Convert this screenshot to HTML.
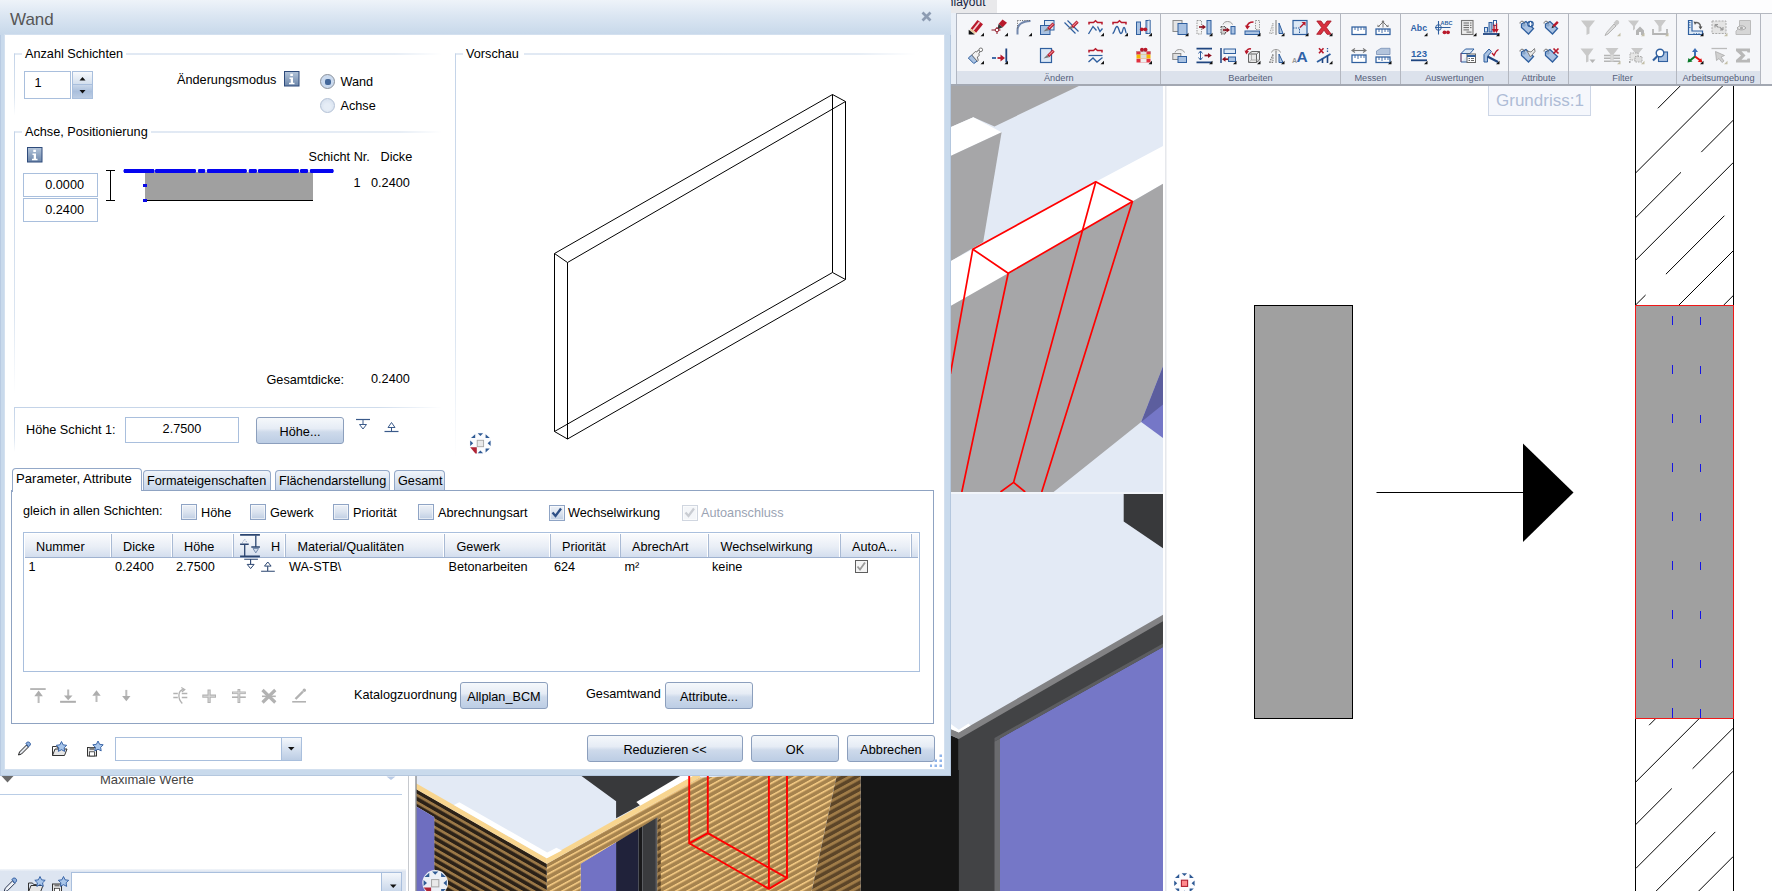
<!DOCTYPE html>
<html><head><meta charset="utf-8"><title>Wand</title>
<style>
*{box-sizing:border-box;margin:0;padding:0}
html,body{width:1772px;height:891px;overflow:hidden;background:#fff}
body{font-family:"Liberation Sans",sans-serif;font-size:13px;color:#000;position:relative}
.a{position:absolute}
.t{position:absolute;white-space:nowrap;line-height:16px;height:16px}
#stage{position:absolute;left:0;top:0;width:1772px;height:891px;overflow:hidden;background:#fff}
/* dialog */
#dlg{position:absolute;left:0;top:0;width:950.5px;height:775.5px;background:#c9daec;box-shadow:inset -1px -1px 0 #b4c7de, inset 1px 0 0 #b9cbe2}
#dlgtitle{position:absolute;left:0;top:0;width:950.5px;height:35px;background:linear-gradient(#eef3f9 0%,#dbe6f2 45%,#c7d8ea 100%)}
#dlgbody{position:absolute;left:5px;top:35px;width:939.3px;height:734.2px;background:#fff;box-shadow:0 0 0 1px #d3e0ef}
.inp{position:absolute;background:#fff;border:1px solid #a9bfdd}
.btn{position:absolute;border:1px solid #8c9fbd;border-radius:3px;background:linear-gradient(#f5f8fb 0%,#e6ecf5 42%,#cedaeb 56%,#bccde4 100%);text-align:center;white-space:nowrap}
.cb{position:absolute;width:16px;height:16px;border:1px solid #8fa4c5;background:linear-gradient(#edf1f7 0%,#dbe3ef 50%,#bfcee3 100%);box-shadow:inset 0 0 0 1px rgba(255,255,255,.55)}
.tab{position:absolute;border:1px solid #93a8c8;border-bottom:none;border-radius:4px 4px 0 0;background:linear-gradient(#f0f4fa 0%,#dde6f2 45%,#c4d3e8 100%);white-space:nowrap}
.th{position:absolute;top:0;height:23px;border-right:1px solid #a9bad4;box-shadow:inset -2px 0 0 -1px #fff;line-height:26px;white-space:nowrap}
.info{width:15.5px;height:15.5px;border:1px solid #5f7aa3;background:linear-gradient(#9ab0cf,#7690b6);}
.info:after{content:"";position:absolute;left:5.5px;top:6px;width:3px;height:6.5px;background:#fff;box-shadow:0 -3.5px 0 -0px #fff, -1.5px 0 0 -0.8px #fff}
.radio{width:15px;height:15px;border-radius:50%;border:1px solid #b3c1d5;background:radial-gradient(circle at 50% 60%,#e6edf6 30%,#d3deed 90%)}
.radio.on{border-color:#8b929c;background:#cbdaee}
.radio i{position:absolute;left:3.5px;top:3.5px;width:6px;height:6px;border-radius:2px;background:#44689a}
</style></head><body><div id="stage">
<svg class="a" style="left:0;top:0" width="1772" height="891" viewBox="0 0 1772 891" shape-rendering="auto">
<defs>
<clipPath id="cUp"><rect x="951" y="86" width="212" height="406"/></clipPath>
<clipPath id="cLo"><rect x="416" y="494" width="747" height="397"/></clipPath>
<clipPath id="cCol"><rect x="1635.5" y="86" width="98" height="805"/></clipPath>
<pattern id="woodL" width="40" height="6.2" patternUnits="userSpaceOnUse" patternTransform="skewY(-28.6)">
 <rect width="40" height="6.2" fill="#a6834e"/><rect y="0" width="40" height="1.7" fill="#f3c983"/><rect y="1.7" width="40" height=".8" fill="#c49c60"/>
</pattern>
<pattern id="woodLs" width="40" height="7.2" patternUnits="userSpaceOnUse" patternTransform="skewY(-28.6)">
 <rect width="40" height="7.2" fill="#5c4528"/><rect y="0" width="40" height="3.2" fill="#a07c48"/>
</pattern>
<pattern id="woodD" width="40" height="7.3" patternUnits="userSpaceOnUse" patternTransform="skewY(29.8)">
 <rect width="40" height="7.3" fill="#2b2117"/><rect y="0" width="40" height="3.1" fill="#9b7847"/>
</pattern>
</defs>
<!-- plan view -->
<rect x="1163" y="86" width="609" height="805" fill="#fff"/>
<rect x="1165" y="86" width="1.5" height="805" fill="#e6e8ec"/>
<g clip-path="url(#cCol)" stroke="#000" stroke-width="1" fill="none">
 <path d="M1657.9 108.3L1681 85.2M1635.2 173.4L1724.4 84.2M1701.3 152.1L1733.3 120.1M1635.2 218.1L1681 172.3M1635.2 260.6L1733.3 162.5M1665.9 274.2L1724.4 215.7M1678.6 305.4L1733.3 250.7M1635.2 305.4L1645.6 295M1723.4 305.4L1733.3 295.5"/>
 <path d="M1649.1 725.2L1656.2 718.1M1635.9 781.9L1699.7 718.1M1692.6 768.7L1733.2 728.1M1635.9 824.4L1671.8 788.5M1635.9 868.4L1733.2 771.1M1656.2 891L1715.3 831.9M1698.7 891L1733.2 856.5"/>
</g>
<path d="M1635.5 86V891M1733.5 86V891" stroke="#000" stroke-width="1"/>
<rect x="1635.5" y="305.5" width="98" height="413" fill="#a0a0a0" stroke="#f01818" stroke-width="1"/>
<g stroke="#1414e6" stroke-width="1">
 <path d="M1672.5 316v9M1672.5 365v9M1672.5 414v9M1672.5 463v9M1672.5 512v9M1672.5 561v9M1672.5 610v9M1672.5 659v9M1672.5 708v10"/>
 <path d="M1700.5 317v8M1700.5 366v8M1700.5 415v8M1700.5 464v8M1700.5 513v8M1700.5 562v8M1700.5 611v8M1700.5 660v8M1700.5 709v9"/>
</g>
<rect x="1254.5" y="305.5" width="98" height="413" fill="#a0a0a0" stroke="#000" stroke-width="1"/>
<path d="M1376.5 492.5H1524" stroke="#000" stroke-width="1"/>
<polygon points="1523,443.5 1573.5,492.5 1523,542" fill="#000"/>

<!-- upper 3D -->
<g clip-path="url(#cUp)">
 <rect x="951" y="86" width="212" height="406" fill="#e3eaf5"/>
 <polygon points="950.9,85.2 1080.5,85.2 994.5,126.4 973.3,117.2 950.9,127.1" fill="#a6a6a8"/>
 <polygon points="950.9,127.1 973.3,117.2 1001.6,132.3 950.9,155.9" fill="#fff"/>
 <polygon points="950.9,155.9 1001.6,132.3 983.2,242.1 950.9,261" fill="#a6a6a8"/>
 <polygon points="1163,146 1163,183.7 1132.4,201.4 1008.2,273.3 998,280 950.9,305.9 950.9,261 972.8,249.2 1095.8,181.8" fill="#fff"/>
 <polygon points="1163,183.7 1132.4,201.4 1008.2,273.3 950.9,305.9 950.9,492 1053.6,492 1141.2,421.9 1163,366.4" fill="#a6a6a8"/>
 <polygon points="1141.2,421.9 1163,366.4 1163,438" fill="#7577c7"/>
 <polygon points="1141.2,421.9 1163,366.4 1163,404.5" fill="#5c5e9e"/>
 <g stroke="#f00" stroke-width="1.7" fill="none" stroke-linejoin="round">
  <polygon points="1095.8,181.8 1132.4,201.4 1008.2,273.3 972.8,249.2"/>
  <path d="M972.8 249.2L950.4 373.8M1008.2 273.3L961.8 492M1095.8 181.8L1013.6 482.4L1000.5 492M1013.6 482.4L1025.2 492M1132.4 201.4L1041.7 492"/>
 </g>
</g>
<!-- separator between 3D views -->
<rect x="951" y="492" width="212" height="2.5" fill="#f2f5fa"/>
<!-- lower 3D -->
<g clip-path="url(#cLo)">
 <rect x="416" y="494" width="747" height="397" fill="#e3eaf5"/>
 <!-- right part visible beside dialog -->
 <polygon points="1123.7,494 1163,494 1163,548.3 1123.7,521.5" fill="#38393b"/>
 <polygon points="1163,616 958.8,734 958.8,891 1163,891" fill="#424345"/>
 <polygon points="1163,614.7 958.8,732.3 950.5,728.8 950.5,735 958.8,738.9 1163,621.3" fill="#828284"/>
 <polygon points="1163,647 1000,738.4 1000,891 1163,891" fill="#7577c7"/>
 <polygon points="1000,738.4 994.5,741.5 994.5,891 1000,891" fill="#6a6b6e"/>
 <polygon points="1163,647 1000,738.4 994.5,741.5 994.5,738 1163,643.4" fill="#5c5d60"/>
 <polygon points="950,735 958.8,738.9 958.8,891 950,891" fill="#151515"/>
 <polygon points="950.5,723.7 958.8,729.8 968.5,723.6 970.5,725.4 958.8,732.6 950.5,728.9" fill="#fff"/>
 <!-- under dialog: black right -->
 <rect x="860.6" y="770" width="98.2" height="121" fill="#151515"/>
 <!-- dark gray recess + white sliver -->
 <polygon points="573.3,770 690,770 690,778 639.8,805.3 616.1,818.2 616.1,801.2" fill="#38393b"/>
 <polygon points="636.4,801.9 686,772.5 700,772.5 640.5,806" fill="#fff"/>
 <!-- window opening under beam -->
 <polygon points="580.7,863.7 616.1,842 616.1,891 580.7,891" fill="#7272c4"/>
 <polygon points="616.1,836 638.5,826 638.5,891 616.1,891" fill="#20223a"/>
 <polygon points="638.5,826 642.5,824 642.5,891 638.5,891" fill="#19191b"/>
 <polygon points="642.5,824 657.5,815 657.5,891 642.5,891" fill="#3a3b3e"/>
 <polygon points="655.5,816 657.5,815 657.5,891 655.5,891" fill="#5a5b5e"/>
 <!-- right wall light wood: beam + pillar + right portion -->
 <polygon points="546.8,863.7 700,777.5 837.5,772 811.7,891 657.5,891 657.5,817.3 580.7,863.7 580.7,891 546.8,891" fill="url(#woodL)"/>
 <polygon points="657.5,820 660.8,818 660.8,891 657.5,891" fill="url(#woodLs)"/>
 <polygon points="837.5,772 860.6,772 860.6,891 811.7,891" fill="url(#woodLs)"/>
 <!-- cap right wall -->
 <polygon points="546.8,858.3 700,772.1 700,777.5 546.8,863.7" fill="#f8d58f"/>
 <!-- left wall dark wood -->
 <polygon points="416,789 546.8,863.7 546.8,891 434.2,891 434.2,817 416,806.2" fill="url(#woodD)"/>
 <polygon points="416,806.2 434.2,817 434.2,891 416,891" fill="#6e6ec0"/>
 <polygon points="416,783.3 546.8,858.3 546.8,863.7 416,789" fill="#f8d58f"/>
 <!-- white parapet band -->
 <polygon points="453.9,805 459.3,802.2 547.3,852.6 556.4,847.8 561.9,850.4 546.8,858.3" fill="#fff"/>
 <!-- red wire -->
 <g stroke="#f00" stroke-width="1.9" fill="none">
  <path d="M689.2 770V843.3L768.9 888.8L787 878V770M707.8 770V833.2L787 878M689.2 843.3L707.8 833.2M768.9 770V888.8"/>
 </g>
</g>
<!-- frame between left palette and 3D view -->
<rect x="408" y="776" width="8" height="115" fill="#fff"/>
<rect x="408" y="776" width="1" height="115" fill="#c6c9ce"/>
<rect x="415.3" y="776" width="1.4" height="115" fill="#8e9094"/>
</svg>
<div class="a" id="tb" style="left:951px;top:0;width:821px;height:86px;background:#fdfdfe"><div class="a" style="left:0;top:0;width:46px;height:12.5px;background:#e9e9eb;overflow:hidden"><div class="t" style="left:-4.2px;top:-5.8px;font-size:12px;color:#16233f">nlayout</div></div><div class="a" style="left:0;top:13px;width:821px;height:73px;background:#f5f6f9;border-top:1px solid #b4b8c0"></div><div class="a" style="left:0;top:13px;width:6px;height:71px;background:#e9eff7;border-right:1px solid #b0b6c2"></div><div class="a" style="left:6px;top:71px;width:803.5px;height:13.5px;background:#dce2ec"></div><div class="a" style="left:0;top:84px;width:821px;height:2px;background:#a3a8b2"></div><div class="a" style="left:209.0px;top:14px;width:1px;height:70px;background:#b3b7c0"></div><div class="t" style="left:6px;width:203.5px;top:70.5px;text-align:center;font-size:9.2px;line-height:14px;height:14px;color:#55607a">Ändern</div><div class="a" style="left:389.0px;top:14px;width:1px;height:70px;background:#b3b7c0"></div><div class="t" style="left:209.5px;width:180.0px;top:70.5px;text-align:center;font-size:9.2px;line-height:14px;height:14px;color:#55607a">Bearbeiten</div><div class="a" style="left:449.0px;top:14px;width:1px;height:70px;background:#b3b7c0"></div><div class="t" style="left:389.5px;width:60.0px;top:70.5px;text-align:center;font-size:9.2px;line-height:14px;height:14px;color:#55607a">Messen</div><div class="a" style="left:557.0px;top:14px;width:1px;height:70px;background:#b3b7c0"></div><div class="t" style="left:449.5px;width:108.0px;top:70.5px;text-align:center;font-size:9.2px;line-height:14px;height:14px;color:#55607a">Auswertungen</div><div class="a" style="left:617.0px;top:14px;width:1px;height:70px;background:#b3b7c0"></div><div class="t" style="left:557.5px;width:60.0px;top:70.5px;text-align:center;font-size:9.2px;line-height:14px;height:14px;color:#55607a">Attribute</div><div class="a" style="left:725.0px;top:14px;width:1px;height:70px;background:#b3b7c0"></div><div class="t" style="left:617.5px;width:108.0px;top:70.5px;text-align:center;font-size:9.2px;line-height:14px;height:14px;color:#55607a">Filter</div><div class="a" style="left:809.0px;top:14px;width:1px;height:70px;background:#b3b7c0"></div><div class="t" style="left:725.5px;width:84.0px;top:70.5px;text-align:center;font-size:9.2px;line-height:14px;height:14px;color:#55607a">Arbeitsumgebung</div><svg class="a" style="left:0;top:0" width="821" height="86" viewBox="951 0 821 86"><g transform="translate(967.5,19.5)"><path d="M10 .5l5.5 4.2-6.8 8.5L3.2 9z" fill="#b8192b"/><path d="M11.3 2.3l1.3 1-6.5 8.2-1.3-1z" fill="#f6d0d4"/><path d="M3.2 9l5.5 4.2-1.6 1.3-5-3.8z" fill="#e8c89a"/><path d="M1.2 10.2L7.3 15H1.2z" fill="#111"/><path d="M16.5 13.3v3.5H13z" fill="#111"/></g><g transform="translate(991.5,19.5)"><path d="M11 0l4.5 3.3-4.2 4.5L7 4.6z" fill="#b8192b"/><path d="M7 4.6l4.3 3.2L6 10z" fill="#333"/><path d="M0 10.5h9M5.5 7.5v7" stroke="#8c0f1e" stroke-width="1"/><circle cx="5.5" cy="10.5" r="1.8" fill="#fff" stroke="#8c0f1e" stroke-width=".9"/><path d="M16.5 13.3v3.5H13z" fill="#111"/></g><g transform="translate(1015.5,19.5)"><path d="M2 15V11Q2 2 15 1.5" stroke="#7388ad" stroke-width="2" fill="none"/><path d="M2 1h13M2 1v8" stroke="#666" stroke-width="1" stroke-dasharray="1 1.3" fill="none"/><path d="M16.5 13.3v3.5H13z" fill="#111"/></g><g transform="translate(1039.5,19.5)"><rect x="5" y="1" width="9.5" height="9.5" fill="#dce8f5" stroke="#2f5f9f"/><rect x="1" y="6" width="9.5" height="9" fill="#a9c2e2" stroke="#2f5f9f"/><g transform="translate(4,3)"><path d="M3.5 5.5L9 0l2.2 2.2L5.7 7.7z" fill="#b8192b"/><path d="M5 5.2L9.3 .9l.8.8L5.8 6z" fill="#ec8a92"/><path d="M0 9l3.5-3.5 2.2 2.2z" fill="#777"/></g></g><g transform="translate(1063.5,19.5)"><path d="M1 3l11 11M4 1l11 11" stroke="#2f5f9f" stroke-width="1.2"/><g transform="translate(4,1)"><path d="M3.5 5.5L9 0l2.2 2.2L5.7 7.7z" fill="#b8192b"/><path d="M5 5.2L9.3 .9l.8.8L5.8 6z" fill="#ec8a92"/><path d="M0 9l3.5-3.5 2.2 2.2z" fill="#777"/></g></g><g transform="translate(1087.5,19.5)"><path d="M1.5 5V3H6l2-1.8L10 3h4.5v2" stroke="#b8192b" stroke-width="1.5" fill="none"/><path d="M1 14.5L5.5 7l3.5 4" stroke="#2f5f9f" stroke-width="1.3" fill="none"/><path d="M10 7l2.5 5L15 9" stroke="#2f5f9f" stroke-width="1.3" fill="none"/><path d="M16.5 13.3v3.5H13z" fill="#111"/></g><g transform="translate(1111.5,19.5)"><path d="M1.5 5V3H6l2-1.8L10 3h4.5v2" stroke="#b8192b" stroke-width="1.5" fill="none"/><path d="M1 14c2 0 2.5-7 4.5-7s2 7 4 7 1.5-6 3-6 1.5 6 2.5 6" stroke="#2f5f9f" stroke-width="1.3" fill="none"/><path d="M16.5 13.3v3.5H13z" fill="#111"/></g><g transform="translate(1135.5,19.5)"><rect x="1" y="2.5" width="4" height="12.5" fill="#a9c2e2" stroke="#2f5f9f"/><rect x="10.5" y="1" width="4" height="13" fill="#a9c2e2" stroke="#2f5f9f"/><path d="M12.5 1l2 -0.5v13l-2 .5" fill="#dce8f5" stroke="#2f5f9f" stroke-width=".6"/><rect x="5" y="9" width="6" height="1.6" fill="#b8192b"/><circle cx="6.3" cy="9.8" r="1.9" fill="#b8192b"/><circle cx="9.8" cy="9.8" r="1.9" fill="#b8192b"/><path d="M16.5 13.3v3.5H13z" fill="#111"/></g><g transform="translate(967.5,47.5)"><path d="M.8 10.5l3.5-3 5.5 6-3.5 2.5z" fill="#a9c2e2" stroke="#2f5f9f"/><path d="M4.3 7.5l3.5-3.5 1.5.5 1.5-2 2 1.5-1.5 2 .5 2-2 1.5 1 3.5-1 .8z" fill="#f2f2f2" stroke="#666" stroke-width=".9"/><circle cx="13.3" cy="2.3" r="1.8" fill="#fff" stroke="#666" stroke-width=".9"/><path d="M16.5 13.3v3.5H13z" fill="#111"/></g><g transform="translate(991.5,47.5)"><path d="M.5 10.5h4" stroke="#2f5f9f" stroke-width="1.8"/><path d="M6 10.5h5" stroke="#b8192b" stroke-width="1.8"/><path d="M9 7l4.5 3.5L9 14z" fill="#b8192b"/><path d="M14.8 1v14" stroke="#1f4580" stroke-width="1.8"/><path d="M16.5 13.3v3.5H13z" fill="#111"/></g><g transform="translate(1039.5,47.5)"><rect x="1" y="1" width="11" height="14" fill="#dce8f5" stroke="#2f5f9f" stroke-width="1.2"/><g transform="translate(4,2)"><path d="M3.5 5.5L9 0l2.2 2.2L5.7 7.7z" fill="#b8192b"/><path d="M5 5.2L9.3 .9l.8.8L5.8 6z" fill="#ec8a92"/><path d="M0 9l3.5-3.5 2.2 2.2z" fill="#777"/></g></g><g transform="translate(1087.5,47.5)"><path d="M1.5 5V3H6l2-1.8L10 3h4.5v2" stroke="#b8192b" stroke-width="1.5" fill="none"/><path d="M1 8h14" stroke="#2f5f9f" stroke-width="1.2"/><path d="M1 14.5l4.5-4 4 4L15 10" stroke="#2f5f9f" stroke-width="1.3" fill="none"/><path d="M16.5 13.3v3.5H13z" fill="#111"/></g><g transform="translate(1135.5,47.5)"><rect x="1" y="4" width="14" height="2.8" fill="#e0e0e0" stroke="#999" stroke-width=".5"/><rect x="1" y="7" width="14" height="4" fill="#f5b800"/><rect x="5" y="7" width="6" height="4" fill="#ddd"/><rect x="1" y="11.3" width="14" height="3.7" fill="#e03040"/><rect x="5" y="11.3" width="6" height="3.7" fill="#eee"/><rect x="1" y="4" width="4" height="2.8" fill="#e03040"/><rect x="11" y="4" width="4" height="2.8" fill="#e03040"/><circle cx="6.5" cy="2.3" r="2" fill="#b8192b"/><circle cx="10" cy="2.3" r="2" fill="#b8192b"/><path d="M16.5 13.3v3.5H13z" fill="#111"/></g><g transform="translate(1172,19.5)"><rect x="1" y="1" width="9" height="11" fill="#e4e4e4" stroke="#8a8a8a"/><rect x="6" y="4" width="9" height="11" fill="#a9c2e2" stroke="#2f5f9f"/><path d="M16.5 13.3v3.5H13z" fill="#111"/></g><g transform="translate(1196,19.5)"><rect x="1" y="1" width="4.5" height="13.5" fill="#f4f4f4" stroke="#999" stroke-dasharray="1.5 1"/><path d="M3 7.5h5" stroke="#8c0f1e" stroke-width="1.6"/><path d="M6.5 5l3.5 2.5-3.5 2.5z" fill="#8c0f1e"/><rect x="11" y="1" width="4" height="13.5" fill="#a9c2e2" stroke="#2f5f9f"/><path d="M16.5 13.3v3.5H13z" fill="#111"/></g><g transform="translate(1220,19.5)"><path d="M3 5C4 1 11 1 12.5 5" stroke="#999" fill="#eee" stroke-width="1"/><rect x="1" y="7" width="4.5" height="7.5" fill="#ccc" stroke="#555" stroke-dasharray="1.5 1"/><path d="M3 10.5h5" stroke="#8c0f1e" stroke-width="1.6"/><path d="M6.5 8l3.5 2.5-3.5 2.5z" fill="#8c0f1e"/><rect x="11" y="7" width="4" height="7.5" fill="#a9c2e2" stroke="#2f5f9f"/></g><g transform="translate(1244,19.5)"><rect x="11.5" y="1" width="4" height="9" fill="#f0f0f0" stroke="#999" stroke-dasharray="1.5 1"/><path d="M3 8C3 4 6 2.5 9.5 2.5" stroke="#b8192b" stroke-width="1.6" fill="none"/><path d="M.8 6l2.5 4 2.7-3.5z" fill="#b8192b"/><rect x="1" y="11.5" width="14.5" height="3.5" fill="#a9c2e2" stroke="#2f5f9f"/><path d="M16.5 13.3v3.5H13z" fill="#111"/></g><g transform="translate(1268,19.5)"><path d="M1.5 14L5 3.5V14z" fill="#e8e8e8" stroke="#aaa" stroke-dasharray="1.5 1"/><path d="M8 .5v15" stroke="#777" stroke-width="1"/><path d="M11 3.5L15 14h-4z" fill="#a9c2e2" stroke="#2f5f9f"/><path d="M16.5 13.3v3.5H13z" fill="#111"/></g><g transform="translate(1292,19.5)"><rect x="1" y="1" width="14" height="14" fill="#dce8f5" stroke="#2f5f9f" stroke-width="1.2"/><path d="M1 8.5h6.5V15" stroke="#2f5f9f" stroke-dasharray="1.5 1" fill="none"/><path d="M8 8L13 3" stroke="#b8192b" stroke-width="1.5"/><path d="M9.5 2.5H13.5V6.5z" fill="#b8192b"/><path d="M16.5 13.3v3.5H13z" fill="#111"/></g><g transform="translate(1316,19.5)"><path d="M.8 1.5h4.2L8 5.5l3-4h4.2L10.3 8l5 6.8H11L8 10.6 5 14.8H.7L5.7 8z" fill="#d8303f" stroke="#a31525" stroke-width=".8"/><path d="M16.5 13.3v3.5H13z" fill="#111"/></g><g transform="translate(1172,47.5)"><path d="M3 5C4 1 11 1 12.5 5" stroke="#999" fill="#eee" stroke-width="1"/><rect x=".8" y="6" width="8" height="6" fill="#e0e0e0" stroke="#888"/><rect x="6" y="9" width="8.5" height="6" fill="#a9c2e2" stroke="#2f5f9f"/></g><g transform="translate(1196,47.5)"><path d="M.5 1.2h15.5M.5 14.8h15.5" stroke="#1f4580" stroke-width="1.8"/><path d="M4.5 3.5v9M2.5 6L4.5 3.5 6.5 6M2.5 10L4.5 12.5 6.5 10" stroke="#2f5f9f" stroke-width="1" fill="none"/><path d="M8.5 8h4" stroke="#8c0f1e" stroke-width="1.7"/><path d="M12 5.5L15.8 8 12 10.5z" fill="#8c0f1e"/><path d="M16.5 13.3v3.5H13z" fill="#111"/></g><g transform="translate(1220,47.5)"><path d="M1 .5v15" stroke="#1f4580" stroke-width="1.5"/><rect x="4" y="1.5" width="11.5" height="4.5" fill="#dce8f5" stroke="#2f5f9f"/><rect x="8.5" y="9.5" width="7" height="4.5" fill="#a9c2e2" stroke="#2f5f9f"/><path d="M4 11.7h4" stroke="#8c0f1e" stroke-width="1.7"/><path d="M5.5 9L2 11.7 5.5 14.3z" fill="#8c0f1e"/><path d="M16.5 13.3v3.5H13z" fill="#111"/></g><g transform="translate(1244,47.5)"><path d="M2 5C2.5 2 5 1 7 1.5" stroke="#b8192b" stroke-width="1.5" fill="none"/><path d="M.5 3l1.8 4L5 3.8z" fill="#b8192b"/><path d="M4.5 6.5h8v8.5h-8zM4.5 6.5L7.5 4h8l-3 2.5M15.5 4v8.5L12.5 15" fill="#e8e8e8" stroke="#666" stroke-width="1"/><path d="M7.5 4v8.5h8M7.5 12.5L4.5 15" stroke="#999" stroke-width=".7" fill="none"/><path d="M16.5 13.3v3.5H13z" fill="#111"/></g><g transform="translate(1268,47.5)"><path d="M3.5 5C4.5 1 11.5 1 12.5 5" stroke="#999" fill="#eee" stroke-width="1"/><path d="M1.5 15L5 6.5V15z" fill="#ddd" stroke="#777" stroke-dasharray="1.5 1"/><path d="M8 3v12.5" stroke="#777" stroke-width="1"/><path d="M11 6.5L15 15h-4z" fill="#a9c2e2" stroke="#2f5f9f"/><path d="M16.5 13.3v3.5H13z" fill="#111"/></g><g transform="translate(1292,47.5)"><text x="4.5" y="14" font-family="Liberation Sans" font-weight="bold" font-size="15.5" fill="#2f62a8">A</text><text x="0" y="15" font-family="Liberation Sans" font-weight="bold" font-size="7" fill="#999">A</text></g><g transform="translate(1316,47.5)"><path d="M1 14.5L14.5 6.5" stroke="#2f5f9f" stroke-width="2"/><path d="M6.5 11v4.5M11.5 8v7.5" stroke="#1f4580" stroke-width="1.6"/><path d="M3 .8l4.5 5M7.5 .8L3 5.8" stroke="#b8192b" stroke-width="1.6"/><path d="M11.5 .5v5" stroke="#2f5f9f" stroke-width="1.3" stroke-dasharray="1.3 1.3"/><path d="M16.5 13.3v3.5H13z" fill="#111"/></g><g transform="translate(1351,19.5)"><rect x="1" y="7.5" width="14" height="7.5" fill="#fff" stroke="#2f5f9f" stroke-width="1.25"/><path d="M4 7.5v3M7 7.5v4M10 7.5v3M13 7.5v3" stroke="#2f5f9f" stroke-width=".9"/></g><g transform="translate(1375,19.5)"><rect x="1" y="9.5" width="14" height="5.5" fill="#fff" stroke="#2f5f9f" stroke-width="1.25"/><path d="M4 9.5v3M7 9.5v4M10 9.5v3M13 9.5v3" stroke="#2f5f9f" stroke-width=".9"/><path d="M8 8V1.5M4 6.5L8 2.5 12 6.5" stroke="#777" stroke-width="1" fill="none"/><path d="M6.3 2.8L8 .5 9.7 2.8zM2.5 5v2.5h2.5zM13.5 5v2.5H11z" fill="#777"/></g><g transform="translate(1351,47.5)"><rect x="1" y="7.5" width="14" height="7.5" fill="#fff" stroke="#2f5f9f" stroke-width="1.25"/><path d="M4 7.5v3M7 7.5v4M10 7.5v3M13 7.5v3" stroke="#2f5f9f" stroke-width=".9"/><path d="M1.5 3h13" stroke="#777" stroke-width="1.1"/><path d="M4 1L1 3l3 2M12 1l3 2-3 2" stroke="#777" stroke-width="1.1" fill="none"/></g><g transform="translate(1375,47.5)"><rect x="1" y="9.5" width="14" height="5.5" fill="#fff" stroke="#2f5f9f" stroke-width="1.25"/><path d="M4 9.5v3M7 9.5v4M10 9.5v3M13 9.5v3" stroke="#2f5f9f" stroke-width=".9"/><path d="M1.5 7V3.5L6 .8h9V7z" fill="#b3c4dc" stroke="#7890b5" stroke-width=".8"/><path d="M16.5 13.3v3.5H13z" fill="#111"/></g><g transform="translate(1411,19.5)"><text x="-.5" y="11.5" font-family="Liberation Sans" font-weight="bold" font-size="9.5" fill="#2f62a8" textLength="16.5" lengthAdjust="spacingAndGlyphs">Abc</text><path d="M16.5 13.3v3.5H13z" fill="#111"/></g><g transform="translate(1435,19.5)"><circle cx="3.5" cy="8" r="2.8" fill="none" stroke="#2f5f9f" stroke-width="1"/><path d="M3.5 1.5v13.5M0 8h15.5" stroke="#2f5f9f" stroke-width="1.1"/><text x="5.5" y="5.5" font-family="Liberation Sans" font-weight="bold" font-size="5.5" fill="#2f5f9f">ABC</text><circle cx="9.5" cy="12.8" r="1.9" fill="#b8192b"/><circle cx="13" cy="12.8" r="1.9" fill="#b8192b"/></g><g transform="translate(1460,19.5)"><rect x="1.5" y="1" width="11.5" height="14" fill="#ececec" stroke="#777" stroke-width="1.1"/><path d="M3.5 3.5h5.5M3.5 5.8h5.5M3.5 8.1h5.5M3.5 10.4h5.5M10 3.5h1.5M10 5.8h1.5M10 8.1h1.5M6.5 12.6h5" stroke="#666" stroke-width="1"/><path d="M16.5 13.3v3.5H13z" fill="#111"/></g><g transform="translate(1483,19.5)"><rect x="1.5" y="8" width="3" height="4.5" fill="#dce8f5" stroke="#2f5f9f"/><rect x="6" y="3" width="3" height="9.5" fill="#a9c2e2" stroke="#2f5f9f"/><rect x="10.5" y="1" width="3" height="5" fill="#fff" stroke="#2f5f9f"/><path d="M0 14.5h16" stroke="#1f4580" stroke-width="1.8"/><path d="M11 5v6M13.5 4v7" stroke="#b8192b" stroke-width="1.4"/><path d="M8.8 9.5L11 13.5l1.2-2 1.3 2 2.2-4z" fill="#b8192b"/><path d="M16.5 13.3v3.5H13z" fill="#111"/></g><g transform="translate(1411,47.5)"><text x="0" y="9.5" font-family="Liberation Sans" font-weight="bold" font-size="9.5" fill="#2f62a8" textLength="16" lengthAdjust="spacingAndGlyphs">123</text><path d="M0 12.8h16" stroke="#1f4580" stroke-width="1.8"/><path d="M16.5 13.3v3.5H13z" fill="#111"/></g><g transform="translate(1460,47.5)"><path d="M1 14.5V6L5.5 1.5H14L10 6H1M10 6v8.5H1" fill="#dce8f5" stroke="#2f5f9f" stroke-width="1"/><path d="M1 6v8.5" stroke="#b8192b" stroke-width="1" stroke-dasharray="1 1"/><rect x="7" y="6.5" width="8.5" height="8.5" fill="#fff" stroke="#666"/><path d="M7 8.5h8.5" stroke="#2f5f9f" stroke-width="2"/><path d="M8.5 11h1.5M11 11h3M8.5 13h1.5M11 13h3" stroke="#666" stroke-width="1"/></g><g transform="translate(1483,47.5)"><path d="M1 14.5V7L6 1.5 8.5 4 4.5 9v5.5z" fill="#a9c2e2" stroke="#2f5f9f"/><path d="M4.5 9L15 14.5" stroke="#1f4580" stroke-width="2.2"/><path d="M9 5.5l2 2.5C12 5 13.5 3 15.5 2" stroke="#b8192b" stroke-width="1.3" fill="none"/><path d="M16.5 13.3v3.5H13z" fill="#111"/></g><g transform="translate(1519,19.5)"><path d="M2.5 4.5L7 2l7.5 7-5 5.5L2.5 8z" fill="#a9c2e2" stroke="#2f5f9f" stroke-width="1.3"/><path d="M1 4c0-3 4-3 4.5 0" stroke="#666" fill="none" stroke-width="1"/><circle cx="5" cy="5.5" r="1" fill="#fff" stroke="#2f5f9f" stroke-width=".6"/><circle cx="11.5" cy="4.5" r="3.3" fill="#2f5f9f"/><path d="M9.5 4.5h4M11.5 2.5v4" stroke="#fff" stroke-width="1.2"/></g><g transform="translate(1543,19.5)"><path d="M2.5 4.5L7 2l7.5 7-5 5.5L2.5 8z" fill="#a9c2e2" stroke="#2f5f9f" stroke-width="1.3"/><path d="M1 4c0-3 4-3 4.5 0" stroke="#666" fill="none" stroke-width="1"/><circle cx="5" cy="5.5" r="1" fill="#fff" stroke="#2f5f9f" stroke-width=".6"/><path d="M9.5 6L14 1.5l1.7 1.7L11.2 7.7z" fill="#b8192b"/><path d="M8.5 8.7l1-2.7 1.7 1.7z" fill="#222"/></g><g transform="translate(1519,47.5)"><path d="M2.5 4.5L7 2l7.5 7-5 5.5L2.5 8z" fill="#a9c2e2" stroke="#2f5f9f" stroke-width="1.3"/><path d="M1 4c0-3 4-3 4.5 0" stroke="#666" fill="none" stroke-width="1"/><circle cx="5" cy="5.5" r="1" fill="#fff" stroke="#2f5f9f" stroke-width=".6"/><path d="M8 3.5l4 1 3.5-3.5.5 3-3 3.5-1.5 2z" fill="#e8e8e8" stroke="#777" stroke-width=".9"/></g><g transform="translate(1543,47.5)"><path d="M2.5 4.5L7 2l7.5 7-5 5.5L2.5 8z" fill="#a9c2e2" stroke="#2f5f9f" stroke-width="1.3"/><path d="M1 4c0-3 4-3 4.5 0" stroke="#666" fill="none" stroke-width="1"/><circle cx="5" cy="5.5" r="1" fill="#fff" stroke="#2f5f9f" stroke-width=".6"/><path d="M10.5 1l5 5M15.5 1l-5 5" stroke="#b8192b" stroke-width="1.7"/></g><g transform="translate(1580,19.5)"><path d="M1 1h14L9.5 8v6l-3 1.5V8z" fill="#c9c9c9"/></g><g transform="translate(1604,19.5)"><path d="M12 .8c1.5-1 4 1 3 3L12.5 6.5 9.5 3.5z" fill="#c9c9c9"/><path d="M10 4.5l2 2L4 14.5l-3 1.5 1.5-3z" fill="#dcdcdc" stroke="#b5b5b5" stroke-width="1"/><path d="M16.5 13.3v3.5H13z" fill="#c4bfa8"/></g><g transform="translate(1628,19.5)"><path d="M0 1h11L7 6.5v3L5 11V6.5z" fill="#c9c9c9"/><path d="M8 11l4-4 4 4v4.5h-3V12.5h-2v3H8z" fill="#b5b5b5"/><path d="M16.5 13.3v3.5H13z" fill="#c4bfa8"/></g><g transform="translate(1652,19.5)"><path d="M2 .5h12L9.5 6.5v5l-3 1V6.5z" fill="#c9c9c9"/><path d="M1 9.5v5h14V9.5" stroke="#b5b5b5" stroke-width="1.8" fill="none"/><path d="M16.5 13.3v3.5H13z" fill="#c4bfa8"/></g><g transform="translate(1580,47.5)"><path d="M.5 1h13L8.5 8v6L6 15V8z" fill="#c9c9c9"/><path d="M9.5 12h6l-3 3.5z" fill="#b5b5b5"/></g><g transform="translate(1604,47.5)"><path d="M1.5 .5h13L9.5 7v6h-3V7z" fill="#c9c9c9"/><path d="M0 8h16M0 10.8h16M0 13.8h16" stroke="#b5b5b5" stroke-width="1.6"/><path d="M6.5 7h3v7h-3z" fill="#d8d8d8"/><path d="M16.5 13.3v3.5H13z" fill="#c4bfa8"/></g><g transform="translate(1628,47.5)"><path d="M3 .5h12L10.5 6v5l-3 1V6z" fill="#c9c9c9"/><rect x="2" y="5.5" width="8" height="7" fill="#e6e6e6" stroke="#aaa" stroke-dasharray="1.5 1"/><rect x="7" y="9" width="7" height="5.5" fill="#ddd" stroke="#aaa" stroke-dasharray="1.5 1"/><path d="M1 14.5h1.5" stroke="#888" stroke-width="1.5"/><path d="M16.5 13.3v3.5H13z" fill="#c4bfa8"/></g><g transform="translate(1652,47.5)"><rect x="6.5" y="4.5" width="9" height="9.5" fill="#a9c2e2" stroke="#2f5f9f" stroke-width="1.1"/><circle cx="8" cy="5.5" r="3.8" fill="#fff" stroke="#2f5f9f" stroke-width="1.4"/><path d="M5.5 8.5L1 13" stroke="#2f5f9f" stroke-width="2.2"/></g><g transform="translate(1687,19.5)"><path d="M1.5 1v14H15.5v-3.5H5V1z" fill="#dce8f5" stroke="#2f5f9f" stroke-width="1.2"/><path d="M2 3h1.5M2 5.5h1.5M2 8h1.5M7 13.5v1M9.5 13.5v1M12 13.5v1" stroke="#2f5f9f" stroke-width=".8"/><path d="M8 3.5C10.5 2 13.5 4 13.5 7.5" stroke="#666" stroke-width="1.5" fill="none"/><path d="M6.5 2l3 .5-1.5 3zM11.5 7l2 3 2-3z" fill="#555"/><path d="M16.5 13.3v3.5H13z" fill="#111"/></g><g transform="translate(1711,19.5)"><rect x="1" y="1.5" width="14" height="12.5" fill="#e4e4e4" stroke="#aaa" stroke-dasharray="2 1.2"/><path d="M4 5l3.5 3M4 5h3M4 5v3M12 10.5L8.5 7.5M12 10.5h-3M12 10.5v-3" stroke="#999" stroke-width="1.1" fill="none"/><path d="M16.5 13.3v3.5H13z" fill="#c4bfa8"/></g><g transform="translate(1735,19.5)"><path d="M4.5 1H15.5V15H1V11.5L4.5 8z" fill="#d6d6d6" stroke="#bbb"/><path d="M2 8.5C4.5 5.5 8.5 5.5 11 8.5 8.5 11 4.5 11 2 8.5z" fill="#e8e8e8" stroke="#aaa" stroke-width="1"/><circle cx="6.5" cy="8.5" r="1.6" fill="#aaa"/></g><g transform="translate(1687,47.5)"><path d="M8 9V2.5" stroke="#3d6fb5" stroke-width="2"/><path d="M5 4.5L8 .5l3 4z" fill="#3d6fb5"/><path d="M8 9L3 13" stroke="#0a7a2a" stroke-width="2"/><path d="M.5 15l1-4.5L5.5 14z" fill="#0a7a2a"/><path d="M8 9l5.5 4" stroke="#e01010" stroke-width="2"/><path d="M15.5 15l-4.8-.8 3.5-3.5z" fill="#e01010"/><path d="M16.5 13.3v3.5H13z" fill="#111"/></g><g transform="translate(1711,47.5)"><path d="M.5 1h15.5" stroke="#bbb" stroke-width="1.3"/><path d="M4.5 4l9 4-3.5 1.5 3 4-2 1.5-3-4L5.5 13z" fill="#d0d0d0" stroke="#aaa" stroke-width=".8"/><path d="M16.5 13.3v3.5H13z" fill="#c4bfa8"/></g><g transform="translate(1735,47.5)"><path d="M1 1h14v4h-2.5l-.5-1.3H6.5L10.5 8 6.5 12.3H12l.5-1.3H15v4H1v-2.5L6 8 1 3.5z" fill="#b8b8b8"/></g></svg></div><div class="a" style="left:1487.5px;top:86px;width:103px;height:29.5px;background:#f5f7fc;border:1px solid #cdd6e6;border-top:none"></div><div class="t" style="left:1496px;top:90px;font-size:17px;line-height:22px;height:22px;color:#aebcd6">Grundriss:1</div>
<div class="a" id="pal" style="left:0;top:776px;width:408px;height:115px;background:#fff;overflow:hidden">
 <div class="t" style="left:100px;top:-4.5px;font-size:13px;color:#444">Maximale Werte</div>
 <svg class="a" style="left:0;top:0" width="408" height="115"><path d="M1.5 0h12l-6 6.5z" fill="#6a6a6a"/><path d="M386.5 .5h9l-4.5 3.5z" fill="#b9cbe6"/><path d="M0 18.5h402" stroke="#b9cde6" stroke-width="1"/></svg>
 <div class="a" style="left:0;top:93px;width:406px;height:22px;background:linear-gradient(#f3f6fa 0,#dde5f1 2.5px)"></div>
 <div class="a" style="left:71px;top:95.5px;width:331px;height:22px;background:#fff;border:1px solid #a9bfdd"></div>
 <div class="a" style="left:381px;top:96.5px;width:20px;height:20px;background:linear-gradient(#f4f7fb,#c5d4e9);border-left:1px solid #a9bfdd"></div>
 <svg class="a" style="left:1.5px;top:93.5px" width="408" height="26" id="palic"><path d="M2 22l1.2-3.8L10.5 10.900l2.4 2.4-7.3 7.3z" fill="#eef2f8" stroke="#2a3550" stroke-width="1"/><path d="M10 9.5c1.2-2.4 4.6-1.6 4.6 .8 0 1.4-1.2 2.4-2.2 2.8z" fill="#8fb0dc" stroke="#2d5aa0" stroke-width="1"/>
<path d="M26.5 22l2.5-6.5h12l-2.5 6.5z" fill="#e6e6e6" stroke="#333" stroke-width="1"/><path d="M26.5 22v-9h4l1.2 1.6h3" fill="none" stroke="#333" stroke-width="1"/><path d="M38 6.5l1.6 3.3 3.6.5-2.6 2.5.6 3.6-3.2-1.7-3.2 1.7.6-3.6-2.6-2.5 3.6-.5z" fill="#a9c6ea" stroke="#2d5aa0" stroke-width=".9"/>
<rect x="50.5" y="14" width="9" height="8.5" fill="#e6e6e6" stroke="#333" stroke-width="1"/><rect x="52.5" y="18.3" width="5" height="4.2" fill="#fff" stroke="#333" stroke-width=".8"/><rect x="52.5" y="14" width="5" height="2.4" fill="#777"/><path d="M61.5 6.5l1.6 3.3 3.6.5-2.6 2.5.6 3.6-3.2-1.7-3.2 1.7.6-3.6-2.6-2.5 3.6-.5z" fill="#a9c6ea" stroke="#2d5aa0" stroke-width=".9"/>
<path d="M388 14.5h6.5l-3.250 3.5z" fill="#111"/></svg>
</div>
<div id="dlg" style="font-size:12.7px">
<div id="dlgtitle"></div>
<div class="t" style="left:10px;top:9.6px;font-size:17px;line-height:20px;height:20px;color:#565656">Wand</div>
<svg class="a" style="left:921px;top:11px" width="11" height="11"><path d="M1.5 1.5l8 8M9.5 1.5l-8 8" stroke="#8d9cb2" stroke-width="2.7"/></svg>
<div id="dlgbody"></div>

<!-- group boxes -->
<svg class="a" style="left:0;top:0" width="951" height="776">
<defs>
<linearGradient id="fdR" x1="0" x2="1" y1="0" y2="0"><stop offset="0" stop-color="#c3d3e8"/><stop offset=".85" stop-color="#cfdcec"/><stop offset="1" stop-color="#fff"/></linearGradient>
<linearGradient id="fdD" x1="0" x2="0" y1="0" y2="1"><stop offset="0" stop-color="#c3d3e8"/><stop offset=".7" stop-color="#dbe5f1"/><stop offset="1" stop-color="#fff"/></linearGradient>
</defs>
<rect x="14" y="53.5" width="8" height="1" fill="#c3d3e8"/><rect x="126" y="53.5" width="316" height="1" fill="url(#fdR)"/><rect x="14" y="53.5" width="1" height="62" fill="url(#fdD)"/>
<rect x="14" y="131.5" width="8" height="1" fill="#c3d3e8"/><rect x="151" y="131.5" width="291" height="1" fill="url(#fdR)"/><rect x="14" y="131.5" width="1" height="262" fill="url(#fdD)"/>
<rect x="14" y="407" width="428" height="1" fill="url(#fdR)"/><rect x="14" y="407" width="1" height="45" fill="url(#fdD)"/>
<rect x="455" y="53.5" width="8" height="1" fill="#c3d3e8"/><rect x="524" y="53.5" width="392" height="1" fill="url(#fdR)"/><rect x="455" y="53.5" width="1" height="405" fill="url(#fdD)"/>
</svg>
<div class="t" style="left:25px;top:46px">Anzahl Schichten</div>
<div class="t" style="left:25px;top:124px">Achse, Positionierung</div>
<div class="t" style="left:466px;top:46px">Vorschau</div>

<!-- spinner -->
<div class="inp" style="left:24px;top:71px;width:47px;height:27.5px"></div>
<div class="t" style="left:34.5px;top:75px">1</div>
<div class="a" style="left:72px;top:71px;width:21px;height:14px;border:1px solid #a9bfdd;background:linear-gradient(#f7f9fc,#d3dfee)"></div>
<div class="a" style="left:72px;top:85px;width:21px;height:13.5px;border:1px solid #a9bfdd;border-top:none;background:linear-gradient(#c9d7ea,#aabfdc 50%,#bccde4)"></div>
<svg class="a" style="left:72px;top:71px" width="21" height="28"><path d="M7.5 9.5h6l-3-3.5zM7.5 19h6l-3 3.5z" fill="#111"/></svg>

<div class="t" style="left:177px;top:72px">Änderungsmodus</div>
<svg class="a" style="left:284px;top:70.5px" width="16" height="16"><defs><linearGradient id="gi1" x1="0" x2="0" y1="0" y2="1"><stop offset="0" stop-color="#b4c5da"/><stop offset="1" stop-color="#6c86aa"/></linearGradient></defs><rect x=".5" y=".5" width="14.5" height="14.5" fill="url(#gi1)" stroke="#2e4b7b"/><path d="M6.3 2.8h2.6v2.3H6.3zM5.5 6.5h3.5v5.2h1.5v1.5h-5.5v-1.5h1.700V8H5.5z" fill="#fff"/></svg>
<div class="a radio on" style="left:320px;top:74px"><i></i></div>
<div class="t" style="left:340.5px;top:74px">Wand</div>
<div class="a radio" style="left:320px;top:98px"></div>
<div class="t" style="left:340.5px;top:98px">Achse</div>

<!-- Achse positioning -->
<svg class="a" style="left:27px;top:147px" width="16" height="16"><defs><linearGradient id="gi2" x1="0" x2="0" y1="0" y2="1"><stop offset="0" stop-color="#b4c5da"/><stop offset="1" stop-color="#6c86aa"/></linearGradient></defs><rect x=".5" y=".5" width="14.5" height="14.5" fill="url(#gi2)" stroke="#2e4b7b"/><path d="M6.3 2.8h2.6v2.3H6.3zM5.5 6.5h3.5v5.2h1.5v1.5h-5.5v-1.5h1.700V8H5.5z" fill="#fff"/></svg>
<div class="t" style="left:308.5px;top:149px">Schicht Nr.</div>
<div class="t" style="left:380.5px;top:149px">Dicke</div>
<div class="inp" style="left:23px;top:173px;width:75px;height:24px"></div>
<div class="t" style="left:23px;width:61px;text-align:right;top:176.5px">0.0000</div>
<div class="inp" style="left:23px;top:198px;width:75px;height:24px"></div>
<div class="t" style="left:23px;width:61px;text-align:right;top:202px">0.2400</div>
<svg class="a" style="left:100px;top:160px" width="250" height="50">
 <path d="M6 10.5h9M6 40.5h9M10.5 10.5v30" stroke="#000" stroke-width="1"/>
 <rect x="45" y="12" width="168" height="28.5" fill="#a0a0a0"/>
 <path d="M45 40.5h168" stroke="#000" stroke-width="1"/>
 <path d="M23.3 10.95L24.2 9.0H53.8L54.7 10.95L53.8 12.9H24.2ZM54.7 10.95L55.6 9.0H95.4L96.3 10.95L95.4 12.9H55.6ZM97.7 10.95L98.6 9.0H104.6L105.5 10.95L104.6 12.9H98.6ZM106.6 10.95L107.5 9.0H146.2L147.1 10.95L146.2 12.9H107.5ZM148.5 10.95L149.4 9.0H156.3L157.2 10.95L156.3 12.9H149.4ZM157.7 10.95L158.6 9.0H198.4L199.3 10.95L198.4 12.9H158.6ZM199.7 10.95L200.6 9.0H207.5L208.4 10.95L207.5 12.9H200.6ZM209.6 10.95L210.5 9.0H233.0L233.9 10.95L233.0 12.9H210.5Z" fill="#0505f0"/>
 <rect x="43" y="24" width="4" height="3" fill="#0a0ae6"/><rect x="43" y="39" width="4" height="3" fill="#0a0ae6"/>
 
</svg>
<div class="t" style="left:353.5px;top:174.5px">1</div>
<div class="t" style="left:371px;top:174.5px">0.2400</div>
<div class="t" style="left:266.5px;top:371.5px">Gesamtdicke:</div>
<div class="t" style="left:371px;top:371px">0.2400</div>

<!-- Hoehe row -->
<div class="t" style="left:26px;top:421.5px">Höhe Schicht 1:</div>
<div class="inp" style="left:125px;top:417px;width:114px;height:26px"></div>
<div class="t" style="left:125px;width:114px;text-align:center;top:421px">2.7500</div>
<div class="btn" style="left:256px;top:417px;width:88px;height:27px;line-height:28px">Höhe...</div>
<svg class="a" style="left:354px;top:417px" width="48" height="18"><path d="M2 2.5h14" stroke="#3a5a8a" stroke-width="1.2"/><path d="M9 3v4.5" stroke="#3a5a8a"/><path d="M5.5 7.5h7L9 12z" fill="#fff" stroke="#3a5a8a" stroke-width="1"/><path d="M30.5 14.5h14" stroke="#3a5a8a" stroke-width="1.2"/><path d="M37.5 14v-4" stroke="#3a5a8a"/><path d="M34 10.5h7L37.5 5.5z" fill="#fff" stroke="#3a5a8a" stroke-width="1"/></svg>

<!-- preview -->
<svg class="a" style="left:456px;top:60px" width="480" height="400" viewBox="456 60 480 400">
 <g stroke="#000" stroke-width="1" fill="none">
  <path d="M554.5 253.5L832.5 94.5L845.5 101.5L567.5 262.5zM554.5 253.5V431.5L567.5 439V262.5M554.5 431.5L832.5 272.5L845.5 279.5L567.5 439M832.5 94.5V272.5M845.5 101.5V279.5"/>
 </g>
</svg>

<!-- tabs -->
<div class="a" style="left:10.5px;top:489.5px;width:923.5px;height:234px;border:1px solid #8fa3c2;background:#fff"></div>
<div class="tab" style="left:11.5px;top:468px;width:130px;height:23px;background:#fff"></div>
<div class="a" style="left:11.5px;top:490px;width:1px;height:2px;background:#93a8c8"></div>
<div class="t" style="left:16px;top:470.5px;font-size:13.1px">Parameter, Attribute</div>
<div class="tab" style="left:143px;top:469.5px;width:128px;height:20.5px"></div>
<div class="t" style="left:147px;top:472.5px">Formateigenschaften</div>
<div class="tab" style="left:275px;top:469.5px;width:115px;height:20.5px"></div>
<div class="t" style="left:279px;top:472.5px">Flächendarstellung</div>
<div class="tab" style="left:394px;top:469.5px;width:51px;height:20.5px"></div>
<div class="t" style="left:398px;top:472.5px">Gesamt</div>

<!-- checkbox row -->
<div class="t" style="left:23px;top:502.5px">gleich in allen Schichten:</div>
<div class="cb" style="left:181px;top:504px"></div><div class="t" style="left:201px;top:504.5px">Höhe</div>
<div class="cb" style="left:250px;top:504px"></div><div class="t" style="left:270px;top:504.5px">Gewerk</div>
<div class="cb" style="left:333px;top:504px"></div><div class="t" style="left:353px;top:504.5px">Priorität</div>
<div class="cb" style="left:418px;top:504px"></div><div class="t" style="left:438px;top:504.5px">Abrechnungsart</div>
<div class="cb" style="left:548.5px;top:504.5px"><svg width="13" height="13" style="position:absolute;left:0;top:0"><path d="M2.5 6.5l3 3.5L11 2.5" stroke="#2d4f86" stroke-width="2.3" fill="none"/></svg></div><div class="t" style="left:568px;top:504.5px">Wechselwirkung</div>
<div class="cb" style="left:681.5px;top:504.5px;border-color:#d0d6e0;background:#f4f6f9"><svg width="13" height="13" style="position:absolute;left:0;top:0"><path d="M2.5 6.5l3 3.5L11 2.5" stroke="#c9ccd2" stroke-width="2.3" fill="none"/></svg></div><div class="t" style="left:701px;top:504.5px;color:#9aa3b3">Autoanschluss</div>

<!-- table -->
<div class="a" style="left:23px;top:532px;width:897px;height:140px;border:1px solid #a9bfdd;background:#fff"></div>
<div class="a" id="thead" style="left:25px;top:534px;width:893px;height:23.5px;background:linear-gradient(#fafbfd 0%,#e9eef6 55%,#d3deee 100%);border-bottom:1px solid #9fb2d0">
 <div class="th" style="left:0;width:86.5px;padding-left:11px">Nummer</div>
 <div class="th" style="left:86.5px;width:61.5px;padding-left:11.5px">Dicke</div>
 <div class="th" style="left:148px;width:61px;padding-left:11px">Höhe</div>
 <div class="th" style="left:209px;width:51.5px;padding-left:37px">H</div>
 <div class="th" style="left:260.5px;width:159.5px;padding-left:12px">Material/Qualitäten</div>
 <div class="th" style="left:420px;width:106px;padding-left:11.5px">Gewerk</div>
 <div class="th" style="left:526px;width:70px;padding-left:11px">Priorität</div>
 <div class="th" style="left:596px;width:88px;padding-left:11px">AbrechArt</div>
 <div class="th" style="left:684px;width:132px;padding-left:11.5px">Wechselwirkung</div>
 <div class="th" style="left:816px;width:70.5px;padding-left:11px">AutoA...</div>
</div>
<svg class="a" style="left:236px;top:532px" width="44" height="44"><g stroke="#2b4570" fill="none"><path d="M4.1 2.8H23.9M4.1 24.4H23.9" stroke-width="1.7"/><path d="M19.8 3.6V15M8.7 12.3V24" stroke-width="1.3"/><path d="M15.3 15H23.9M4.1 12.2H12.7" stroke-width="1.5"/><path d="M17 16.5h5.6l-2.8 4.4z" fill="#d5deec" stroke="#6b83a8" stroke-width=".9"/><path d="M5.9 11.4L8.7 7.2l2.8 4.2" stroke="#8ea2c0" stroke-width=".9" stroke-dasharray="1.4 1"/>
<path d="M8.2 27.2H21.9M14.6 27.2V32.2" stroke-width="1.1"/><path d="M11.2 32.4h6.9l-3.450 4.2z" fill="#fff" stroke-width="1"/><path d="M25.1 39.2H38.8M31.7 39.2V34.2" stroke-width="1.1"/><path d="M28.5 34.1h6.6L31.8 30z" fill="#fff" stroke-width="1"/></g></svg>
<div class="t" style="left:28.5px;top:558.6px">1</div>
<div class="t" style="left:115px;top:558.6px">0.2400</div>
<div class="t" style="left:176px;top:558.6px">2.7500</div>
<div class="t" style="left:289px;top:558.6px">WA-STB\</div>
<div class="t" style="left:448.5px;top:558.6px">Betonarbeiten</div>
<div class="t" style="left:554px;top:558.6px">624</div>
<div class="t" style="left:624.5px;top:558.6px">m²</div>
<div class="t" style="left:712px;top:558.6px">keine</div>
<div class="a" style="left:854.5px;top:559.5px;width:13.5px;height:13.5px;border:1.7px solid #5e5e5e;background:#f4f4f4"><svg width="11" height="11" style="position:absolute;left:0;top:0"><path d="M1.5 5.5l2.5 3L9 1.5" stroke="#9a9a9a" stroke-width="1.8" fill="none"/></svg></div>

<!-- lower toolbar of tab -->
<svg class="a" style="left:26px;top:684px" width="290" height="24" id="lowic">
<g fill="#adadad" stroke="#adadad" stroke-width="0">
 <rect x="4.2" y="4.2" width="15.5" height="1.7"/><path d="M8.3 12.3h8.6L12.6 6.5z"/><rect x="11.6" y="11.5" width="2" height="7.5" fill="#bbb"/>
 <rect x="34.1" y="16.8" width="15.8" height="2" /><rect x="41.2" y="5.5" width="2" height="7" fill="#bbb"/><path d="M37.9 11.6h8.6L42.2 16.2z"/>
 <path d="M66.3 11.8h8.4L70.5 6.2z"/><rect x="69.5" y="11" width="2" height="7" fill="#bbb"/>
 <rect x="99.3" y="5.9" width="2" height="7" fill="#bbb"/><path d="M96.1 12.1h8.4L100.3 17.3z"/>
</g>
<g stroke="#b2b2b2" fill="none">
 <g transform="translate(-4.7,0)"><path d="M152 9.5h4.5M152 13.5h4.5M160.5 9.5h5.5M160.5 13.5h5.5" stroke-width="1.6"/><path d="M162.5 5.5c-6 .5-6.5 9-1.5 14" stroke-width="1.3"/><path d="M160 3.5l3.5 2-3 2.5" stroke-width="1.2"/></g>
 <path d="M183.1 5.5V19M176.3 12.2H190" stroke-width="3.2"/><path d="M183.1 6.5V18M177.3 12.2H189" stroke="#dcdcdc" stroke-width="1"/>
 <path d="M212.9 5V19" stroke-width="2.8"/><path d="M206 8.8H219.8" stroke-width="2.6"/><path d="M206 13.2H219.8" stroke-width="1.6"/><path d="M212.9 6V18M207 8.8H218.8" stroke="#dcdcdc" stroke-width=".9"/>
 <path d="M236.5 6l12.8 12.5M249.3 6L236.5 18.5" stroke-width="3.2"/><path d="M236 12.3h13.8" stroke-width="1.6"/>
 <path d="M266.2 17.8H280" stroke-width="1.6"/><path d="M269.5 15L277 7.5" stroke-width="2.4"/><circle cx="278.3" cy="6.2" r="1.7" fill="#b2b2b2" stroke="none"/>
</g></svg>
<div class="t" style="left:354px;top:687px">Katalogzuordnung</div>
<div class="btn" style="left:460px;top:682px;width:88px;height:27px;line-height:28px">Allplan_BCM</div>
<div class="t" style="left:586px;top:686px">Gesamtwand</div>
<div class="btn" style="left:665px;top:682px;width:88px;height:27px;line-height:28px">Attribute...</div>

<!-- bottom row -->
<svg class="a" style="left:14px;top:738px" width="100" height="22" id="botic">
 <g><path d="M4.5 17l1-3L12.5 7l2 2-7 7z" fill="#e4e8ee" stroke="#222" stroke-width="1"/><path d="M12 5.5c1-2.4 4.4-1.6 4.4 .6 0 1.3-1.1 2.2-2 2.6z" fill="#8fb0dc" stroke="#2d5aa0" stroke-width="1"/></g>
 <g><path d="M38.5 17.5l2.5-6.5h12l-2.5 6.5z" fill="#e6e6e6" stroke="#333" stroke-width="1"/><path d="M38.5 17.5v-9h4l1.2 1.6h3" fill="none" stroke="#333" stroke-width="1"/><path d="M47.5 3.5l1.6 3.3 3.6.5-2.6 2.5.6 3.6-3.2-1.700-3.2 1.700.6-3.6-2.6-2.5 3.6-.5z" fill="#a9c6ea" stroke="#2d5aa0" stroke-width=".9"/></g>
 <g><rect x="73.5" y="9.5" width="9" height="8.5" fill="#e6e6e6" stroke="#333" stroke-width="1"/><rect x="75.5" y="13.8" width="5" height="4.2" fill="#fff" stroke="#333" stroke-width=".8"/><rect x="75.5" y="9.5" width="5" height="2.4" fill="#777"/><path d="M84 3l1.6 3.3 3.6.5-2.6 2.5.6 3.6-3.2-1.700-3.2 1.700.6-3.6-2.6-2.5 3.6-.5z" fill="#a9c6ea" stroke="#2d5aa0" stroke-width=".9"/></g>
</svg>
<div class="inp" style="left:115px;top:737px;width:187px;height:24px"></div>
<div class="a" style="left:280.5px;top:738px;width:20.5px;height:22px;border-left:1px solid #a9bfdd;background:linear-gradient(#f5f8fc,#d6e1f0 50%,#bccde4)"></div>
<svg class="a" style="left:280px;top:738px" width="22" height="22"><path d="M8 9h6.5l-3.250 3.5z" fill="#111"/></svg>
<div class="btn" style="left:587px;top:735px;width:156px;height:27px;line-height:28px">Reduzieren &lt;&lt;</div>
<div class="btn" style="left:751px;top:735px;width:88px;height:27px;line-height:28px">OK</div>
<div class="btn" style="left:847px;top:735px;width:88px;height:27px;line-height:28px">Abbrechen</div>
<svg class="a" style="left:929.7px;top:753.8px" width="14" height="14"><g fill="#8fb4ea"><rect x="9.5" y=".5" width="2.5" height="2.5"/><rect x="9.5" y="5.5" width="2.5" height="2.5"/><rect x="4.5" y="5.5" width="2.5" height="2.5"/><rect x="9.5" y="10.5" width="2.5" height="2.5"/><rect x="4.5" y="10.5" width="2.5" height="2.5"/><rect x="-.5" y="10.5" width="2.5" height="2.5"/></g></svg>
</div>
<svg class="a" style="left:0;top:0;pointer-events:none" width="1772" height="891" viewBox="0 0 1772 891"><g transform="translate(480.4,443.3) scale(1.0)"><circle r="11.3" fill="#fbfcfe"/><path d="M-2.7 -10 2.7 -10 0 -7.3zM-2.7 10 2.7 10 0 7.3zM-10.2 -2.7 -10.2 2.7 -7.2 0zM10.2 -2.7 10.2 2.7 7.2 0zM-9.4 -5.2 -5.2 -5.2 -5.2 -9.1zM5.2 -9.1 5.2 -5.2 9.4 -5.2zM5.2 5.2 9.4 5.2 5.2 9.1z" fill="#2f5a94"/><path d="M-10.2 3.9H-3.6V10.2H-5z" fill="#b02535"/><rect x="-3.2" y="-3" width="6.4" height="6.4" fill="#e9e9e9" stroke="#a6a6a6" stroke-width=".9"/></g><g transform="translate(435.2,883) scale(1.14)"><circle r="11.3" fill="#eceff6"/><path d="M-2.7 -10 2.7 -10 0 -7.3zM-2.7 10 2.7 10 0 7.3zM-10.2 -2.7 -10.2 2.7 -7.2 0zM10.2 -2.7 10.2 2.7 7.2 0zM-9.4 -5.2 -5.2 -5.2 -5.2 -9.1zM5.2 -9.1 5.2 -5.2 9.4 -5.2zM5.2 5.2 9.4 5.2 5.2 9.1z" fill="#2f5a94"/><path d="M-10.2 3.9H-3.6V10.2H-5z" fill="#b02535"/><rect x="-3.2" y="-3" width="6.4" height="6.4" fill="#e9e9e9" stroke="#a6a6a6" stroke-width=".9"/></g><g transform="translate(1184.4,883.2) scale(1.0)"><circle r="11.3" fill="#fcfcfe"/><path d="M-2.7 -10 2.7 -10 0 -7.3zM-2.7 10 2.7 10 0 7.3zM-10.2 -2.7 -10.2 2.7 -7.2 0zM10.2 -2.7 10.2 2.7 7.2 0zM-9.4 -5.2 -5.2 -5.2 -5.2 -9.1zM5.2 -9.1 5.2 -5.2 9.4 -5.2zM5.2 5.2 9.4 5.2 5.2 9.1z" fill="#2f5a94"/><path d="M-9.4 5.2H-5.2V9.1z" fill="#2f5a94"/><rect x="-3" y="-3" width="6.2" height="6.2" fill="#ff8a8e" stroke="#b02030" stroke-width="1.1"/></g></svg>
</div></body></html>
